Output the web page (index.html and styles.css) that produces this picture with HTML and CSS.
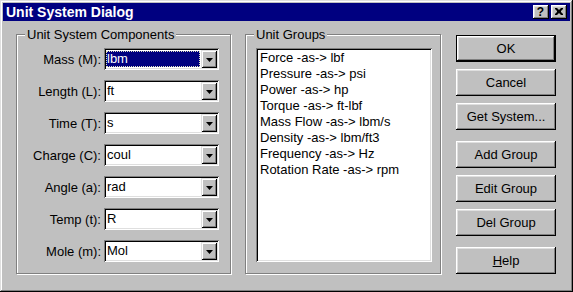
FILE: index.html
```html
<!DOCTYPE html>
<html>
<head>
<meta charset="utf-8">
<link rel="stylesheet" href="styles.css">
</head>
<body>
<div class="window">
  <div class="titlebar">
    <span class="title">Unit System Dialog</span>
    <div class="caption-btns">
      <span class="cbtn qmark">?</span>
      <span class="cbtn close"><svg width="8" height="7" viewBox="0 0 8 7"><path d="M0 0h2l2 2 2-2h2v1l-2 2v1l2 2v1h-2l-2-2-2 2h-2v-1l2-2v-1l-2-2z" fill="#000"/></svg></span>
    </div>
  </div>
  <div class="content">
    <fieldset class="group comps">
      <legend>Unit System Components</legend>
      <div class="rows">
        <span class="lbl">Mass (M):</span>
        <div class="combo"><span class="val sel">lbm</span><span class="drop"><svg width="7" height="4" viewBox="0 0 7 4"><path d="M0 0h7l-3.5 4z" fill="#000"/></svg></span></div>
        <span class="lbl">Length (L):</span>
        <div class="combo"><span class="val">ft</span><span class="drop"><svg width="7" height="4" viewBox="0 0 7 4"><path d="M0 0h7l-3.5 4z" fill="#000"/></svg></span></div>
        <span class="lbl">Time (T):</span>
        <div class="combo"><span class="val">s</span><span class="drop"><svg width="7" height="4" viewBox="0 0 7 4"><path d="M0 0h7l-3.5 4z" fill="#000"/></svg></span></div>
        <span class="lbl">Charge (C):</span>
        <div class="combo"><span class="val">coul</span><span class="drop"><svg width="7" height="4" viewBox="0 0 7 4"><path d="M0 0h7l-3.5 4z" fill="#000"/></svg></span></div>
        <span class="lbl">Angle (a):</span>
        <div class="combo"><span class="val">rad</span><span class="drop"><svg width="7" height="4" viewBox="0 0 7 4"><path d="M0 0h7l-3.5 4z" fill="#000"/></svg></span></div>
        <span class="lbl">Temp (t):</span>
        <div class="combo"><span class="val">R</span><span class="drop"><svg width="7" height="4" viewBox="0 0 7 4"><path d="M0 0h7l-3.5 4z" fill="#000"/></svg></span></div>
        <span class="lbl">Mole (m):</span>
        <div class="combo"><span class="val">Mol</span><span class="drop"><svg width="7" height="4" viewBox="0 0 7 4"><path d="M0 0h7l-3.5 4z" fill="#000"/></svg></span></div>
      </div>
    </fieldset>
    <fieldset class="group groups">
      <legend>Unit Groups</legend>
      <div class="listbox">
        <div class="item">Force -as-&gt; lbf</div>
        <div class="item">Pressure -as-&gt; psi</div>
        <div class="item">Power -as-&gt; hp</div>
        <div class="item">Torque -as-&gt; ft-lbf</div>
        <div class="item">Mass Flow -as-&gt; lbm/s</div>
        <div class="item">Density -as-&gt; lbm/ft3</div>
        <div class="item">Frequency -as-&gt; Hz</div>
        <div class="item">Rotation Rate -as-&gt; rpm</div>
      </div>
    </fieldset>
    <div class="buttons">
      <div class="btn default">OK</div>
      <div class="btn">Cancel</div>
      <div class="btn">Get System...</div>
      <div class="btn spaced">Add Group</div>
      <div class="btn">Edit Group</div>
      <div class="btn">Del Group</div>
      <div class="btn spaced"><u>H</u>elp</div>
    </div>
  </div>
</div>
</body>
</html>
```
FILE: styles.css
```css
html, body {
  margin: 0;
  padding: 0;
  background: #c0c0c0;
}
.window {
  width: 573px;
  height: 292px;
  box-sizing: border-box;
  padding: 3px;
  background: #c0c0c0;
  box-shadow: inset -1px -1px #000, inset 1px 1px #dfdfdf, inset -2px -2px #808080, inset 2px 2px #fff;
  font-family: "Liberation Sans", Arial, sans-serif;
  font-size: 13px;
  color: #000;
}
.titlebar {
  height: 18px;
  background: #000080;
  color: #fff;
  display: flex;
  align-items: center;
  justify-content: space-between;
  padding: 0 3px 0 3px;
}
.title {
  font-weight: bold;
  font-size: 14px;
  line-height: 18px;
}
.caption-btns {
  display: flex;
  gap: 2px;
}
.cbtn {
  width: 16px;
  height: 14px;
  box-sizing: border-box;
  background: #c0c0c0;
  box-shadow: inset -1px -1px #000, inset 1px 1px #fff, inset -2px -2px #808080, inset 2px 2px #dfdfdf;
  display: flex;
  align-items: center;
  justify-content: center;
  color: #000;
}
.qmark {
  font-weight: bold;
  font-size: 12px;
  line-height: 14px;
  padding-right: 1px;
}
.close svg {
  display: block;
  margin-top: -1px;
}
.content {
  display: flex;
  align-items: flex-start;
  padding-left: 13px;
}
.group {
  margin: 6px 0 0 0;
  padding: 0;
  border: 1px solid #808080;
  box-shadow: inset 1px 1px #fff, 1px 1px #fff;
  box-sizing: border-box;
  height: 247px;
  min-width: 0;
}
.group legend {
  margin-left: 8px;
  padding: 0 2px;
  line-height: 15px;
  background: #c0c0c0;
}
.comps {
  width: 215px;
}
.rows {
  display: grid;
  grid-template-columns: 1fr 115px;
  grid-auto-rows: 22px;
  row-gap: 10px;
  column-gap: 3px;
  padding: 6px 11px 0 0;
  align-items: center;
}
.lbl {
  text-align: right;
  white-space: nowrap;
}
.combo {
  height: 22px;
  box-sizing: border-box;
  background: #fff;
  box-shadow: inset 1px 1px #808080, inset -1px -1px #fff, inset 2px 2px #000, inset -2px -2px #dfdfdf;
  display: flex;
  align-items: center;
  padding: 2px;
}
.val {
  flex: 1;
  padding-left: 1px;
  line-height: 16px;
  height: 16px;
}
.val.sel {
  margin: 0 1px 0 0;
  padding-left: 1px;
  background: #000080;
  color: #fff;
  outline: 1px dotted #e0e0c0;
  outline-offset: -1px;
}
.drop {
  width: 16px;
  height: 18px;
  box-sizing: border-box;
  background: #c0c0c0;
  box-shadow: inset 1px 1px #dfdfdf, inset -1px -1px #000, inset 2px 2px #fff, inset -2px -2px #808080;
  display: flex;
  align-items: center;
  justify-content: center;
}
.drop svg {
  display: block;
  margin-top: 1px;
}
.groups {
  width: 196px;
  margin-left: 14px;
}
.listbox {
  margin: 6px 0 0 10px;
  width: 176px;
  height: 214px;
  box-sizing: border-box;
  background: #fff;
  box-shadow: inset 1px 1px #808080, inset -1px -1px #fff, inset 2px 2px #000, inset -2px -2px #dfdfdf;
  padding: 2px 2px 2px 4px;
}
.item {
  line-height: 16px;
  white-space: nowrap;
}
.buttons {
  margin: 14px 0 0 15px;
  width: 100px;
  display: flex;
  flex-direction: column;
  gap: 7px;
}
.btn {
  height: 27px;
  box-sizing: border-box;
  background: #c0c0c0;
  box-shadow: inset -1px -1px #000, inset 1px 1px #fff, inset -2px -2px #808080, inset 2px 2px #dfdfdf;
  display: flex;
  align-items: center;
  justify-content: center;
  line-height: 16px;
}
.btn.default {
  box-shadow: inset 0 0 0 1px #000, inset -2px -2px #000, inset 2px 2px #fff, inset -3px -3px #808080, inset 3px 3px #dfdfdf;
}
.btn.spaced {
  margin-top: 4px;
}
```
